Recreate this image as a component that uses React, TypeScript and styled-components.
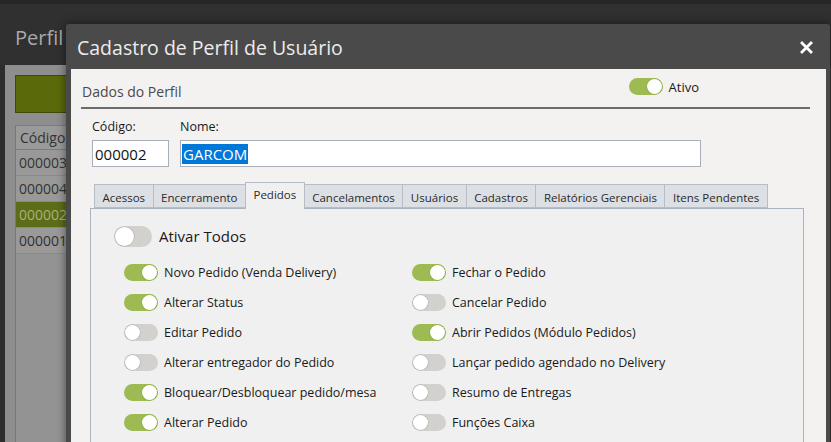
import React from 'react';
import styled, { createGlobalStyle } from 'styled-components';

const GlobalStyle = createGlobalStyle`
  html, body {
    margin: 0;
    padding: 0;
    background: #303030;
  }
  * {
    box-sizing: border-box;
  }
`;

const FONT = `"Open Sans", "Noto Sans", sans-serif`;

interface ToggleProps {
  $on?: boolean;
  $big?: boolean;
}

const leftItems = [
  { label: 'Novo Pedido (Venda Delivery)', on: true },
  { label: 'Alterar Status', on: true },
  { label: 'Editar Pedido', on: false },
  { label: 'Alterar entregador do Pedido', on: false },
  { label: 'Bloquear/Desbloquear pedido/mesa', on: true },
  { label: 'Alterar Pedido', on: true },
];

const rightItems = [
  { label: 'Fechar o Pedido', on: true },
  { label: 'Cancelar Pedido', on: false },
  { label: 'Abrir Pedidos (Módulo Pedidos)', on: true },
  { label: 'Lançar pedido agendado no Delivery', on: false },
  { label: 'Resumo de Entregas', on: false },
  { label: 'Funções Caixa', on: false },
];

const tabs = [
  'Acessos',
  'Encerramento',
  'Pedidos',
  'Cancelamentos',
  'Usuários',
  'Cadastros',
  'Relatórios Gerenciais',
  'Itens Pendentes',
];

const rows = ['000003', '000004', '000002', '000001'];

export default function App() {
  return (
    <Page>
      <GlobalStyle />
      <AppHeader>
        <AppTitle>Perfil</AppTitle>
      </AppHeader>
      <AppBody>
        <GreenButton />
        <Grid>
          <GridHead>Código</GridHead>
          {rows.map((r) => (
            <GridRow key={r} $selected={r === '000002'}>
              {r}
            </GridRow>
          ))}
        </Grid>
      </AppBody>

      <Modal>
        <ModalHeader>
          <ModalTitle>Cadastro de Perfil de Usuário</ModalTitle>
          <CloseButton type="button" aria-label="Fechar">
            <svg width="13" height="13" viewBox="0 0 13 13">
              <path
                d="M2 2 L11 11 M11 2 L2 11"
                stroke="#fff"
                strokeWidth="2.8"
                strokeLinecap="square"
              />
            </svg>
          </CloseButton>
        </ModalHeader>
        <ModalBody>
          <SectionHeader>
            <SectionTitle>Dados do Perfil</SectionTitle>
            <ActiveGroup>
              <Toggle $on />
              <ActiveLabel>Ativo</ActiveLabel>
            </ActiveGroup>
          </SectionHeader>

          <FieldsRow>
            <Field>
              <FieldLabel>Código:</FieldLabel>
              <Input $width={77} value="000002" readOnly />
            </Field>
            <Field>
              <FieldLabel>Nome:</FieldLabel>
              <NameBox>
                <Selected>GARCOM</Selected>
              </NameBox>
            </Field>
          </FieldsRow>

          <TabStrip>
            {tabs.map((t) => (
              <Tab key={t} $active={t === 'Pedidos'}>
                {t}
              </Tab>
            ))}
          </TabStrip>
          <TabPanel>
            <AllRow>
              <Toggle $big />
              <AllLabel>Ativar Todos</AllLabel>
            </AllRow>
            <Columns>
              <Column>
                {leftItems.map((i) => (
                  <OptionRow key={i.label}>
                    <Toggle $on={i.on} />
                    <OptionLabel>{i.label}</OptionLabel>
                  </OptionRow>
                ))}
              </Column>
              <Column>
                {rightItems.map((i) => (
                  <OptionRow key={i.label}>
                    <Toggle $on={i.on} />
                    <OptionLabel>{i.label}</OptionLabel>
                  </OptionRow>
                ))}
              </Column>
            </Columns>
          </TabPanel>
        </ModalBody>
      </Modal>
    </Page>
  );
}

const Page = styled.div`
  position: relative;
  width: 831px;
  height: 442px;
  overflow: hidden;
  display: flex;
  flex-direction: column;
  border-top: 4px solid #262626;
  background: #303030;
  font-family: ${FONT};
`;

const AppHeader = styled.div`
  height: 61px;
  display: flex;
  align-items: center;
  padding: 0 0 0 15px;
`;

const AppTitle = styled.div`
  font-family: ${FONT};
  font-size: 20px;
  color: #a9a9a9;
  margin-top: 6px;
`;

const AppBody = styled.div`
  flex: 1;
  background: #8e8e8e;
  border-left: 5px solid #2d2d2d;
  border-right: 3px solid #3a3a3a;
  padding: 10px 0 0 10px;
  display: flex;
  flex-direction: column;
`;

const GreenButton = styled.div`
  height: 38px;
  background: #5a6a0a;
  border: 1px solid #3f4a08;
  margin: 0 10px 12px 0;
`;

const Grid = styled.div`
  flex: 1;
  background: #939393;
  border-left: 1px solid #777;
`;

const GridHead = styled.div`
  height: 25px;
  padding-left: 4px;
  display: flex;
  align-items: center;
  background: #9a9a9a;
  border-bottom: 1px solid #7c7c7c;
  border-top: 1px solid #7c7c7c;
  font-size: 14px;
  color: #333;
`;

const GridRow = styled.div<{ $selected?: boolean }>`
  height: 26px;
  padding-left: 3px;
  display: flex;
  align-items: center;
  font-size: 14px;
  color: ${(p) => (p.$selected ? '#a8b27a' : '#333')};
  background: ${(p) => (p.$selected ? '#5d6c16' : '#999')};
  border-bottom: 1px solid #8a8a8a;
`;

const Modal = styled.div`
  position: absolute;
  left: 66px;
  top: 20px;
  right: 1px;
  bottom: -10px;
  background: #4a4a4a;
  border-radius: 3px 3px 0 0;
  box-shadow: 0 0 10px rgba(0, 0, 0, 0.5);
  display: flex;
  flex-direction: column;
`;

const ModalHeader = styled.div`
  height: 45px;
  flex-shrink: 0;
  display: flex;
  align-items: center;
  justify-content: space-between;
  padding: 0 17px 0 11px;
`;

const ModalTitle = styled.div`
  font-family: ${FONT};
  font-size: 19.5px;
  color: #ececec;
  margin-top: 1px;
`;

const CloseButton = styled.button`
  border: none;
  background: none;
  padding: 0;
  display: flex;
  cursor: pointer;
  margin-top: 2px;
`;

const ModalBody = styled.div`
  flex: 1;
  margin: 0 4px 0 5px;
  background: #f3f2f1;
  padding: 0 16px 0 10px;
`;

const SectionHeader = styled.div`
  height: 40px;
  display: flex;
  align-items: center;
  justify-content: space-between;
  border-bottom: 2px solid #6b6b6b;
  padding: 0 111px 0 1px;
`;

const SectionTitle = styled.div`
  font-size: 14px;
  color: #4a4a4a;
  margin-top: 6px;
`;

const ActiveGroup = styled.div`
  display: flex;
  align-items: center;
  gap: 6px;
  margin-bottom: 3px;
`;

const ActiveLabel = styled.span`
  font-size: 13px;
  color: #1a1a1a;
`;

const Toggle = styled.span<ToggleProps>`
  position: relative;
  display: inline-block;
  flex-shrink: 0;
  width: ${(p) => (p.$big ? 38 : 34)}px;
  height: ${(p) => (p.$big ? 21 : 17)}px;
  border-radius: 11px;
  background: ${(p) => (p.$on ? '#9dbb52' : '#d2d1ce')};

  &::after {
    content: '';
    position: absolute;
    top: 1px;
    left: ${(p) => (p.$on ? 'auto' : '1px')};
    right: ${(p) => (p.$on ? '1px' : 'auto')};
    width: ${(p) => (p.$big ? 19 : 15)}px;
    height: ${(p) => (p.$big ? 19 : 15)}px;
    border-radius: 50%;
    background: #ffffff;
    box-shadow: 0 0 0 0.6px ${(p) => (p.$on ? '#8aa845' : '#aeaeae')};
  }
`;

const FieldsRow = styled.div`
  display: flex;
  gap: 11px;
  padding: 9px 0 0 11px;
`;

const Field = styled.div`
  display: flex;
  flex-direction: column;
`;

const FieldLabel = styled.label`
  font-size: 12.5px;
  color: #1a1a1a;
  height: 22px;
`;

const Input = styled.input<{ $width: number }>`
  width: ${(p) => p.$width}px;
  height: 27px;
  border: 1px solid #aab0ba;
  background: #fff;
  font-family: ${FONT};
  font-size: 15px;
  color: #111;
  padding: 0 0 0 2px;
  outline: none;
`;

const NameBox = styled.div`
  width: 521px;
  height: 27px;
  border: 1px solid #aab0ba;
  background: #fff;
  display: flex;
  align-items: center;
  padding-left: 1px;
`;

const Selected = styled.span`
  background: #0078d7;
  color: #fff;
  font-size: 15px;
  line-height: 20px;
  padding: 0 1px;
`;

const TabStrip = styled.div`
  display: flex;
  align-items: flex-end;
  margin: 15px 0 0 14px;
  height: 26px;
  position: relative;
  z-index: 1;
`;

const Tab = styled.div<{ $active?: boolean }>`
  height: ${(p) => (p.$active ? 27 : 24)}px;
  margin-bottom: ${(p) => (p.$active ? -1 : 0)}px;
  padding: ${(p) => (p.$active ? '0 7.5px 4px' : '2px 7.5px 0')};
  display: flex;
  align-items: center;
  font-size: 11.5px;
  color: #2a2a2a;
  background: ${(p) => (p.$active ? '#f0f0f0' : '#dcdfe3')};
  border: 1px solid #b6bdc6;
  border-bottom: ${(p) => (p.$active ? 'none' : '1px solid #b6bdc6')};
  margin-left: -1px;
`;

const TabPanel = styled.div`
  margin: 0 6px 0 9px;
  height: 300px;
  background: #f0f0f0;
  border: 1px solid #aab3bf;
  padding: 16px 0 0 23px;
`;

const AllRow = styled.div`
  display: flex;
  align-items: center;
  gap: 7px;
  height: 22px;
`;

const AllLabel = styled.span`
  font-size: 15px;
  color: #1a1a1a;
`;

const Columns = styled.div`
  display: grid;
  grid-template-columns: 288px 1fr;
  padding: 10px 0 0 10px;
`;

const Column = styled.div`
  display: flex;
  flex-direction: column;
`;

const OptionRow = styled.div`
  display: flex;
  align-items: center;
  gap: 6px;
  height: 30px;
`;

const OptionLabel = styled.span`
  font-size: 12.5px;
  color: #1a1a1a;
`;
